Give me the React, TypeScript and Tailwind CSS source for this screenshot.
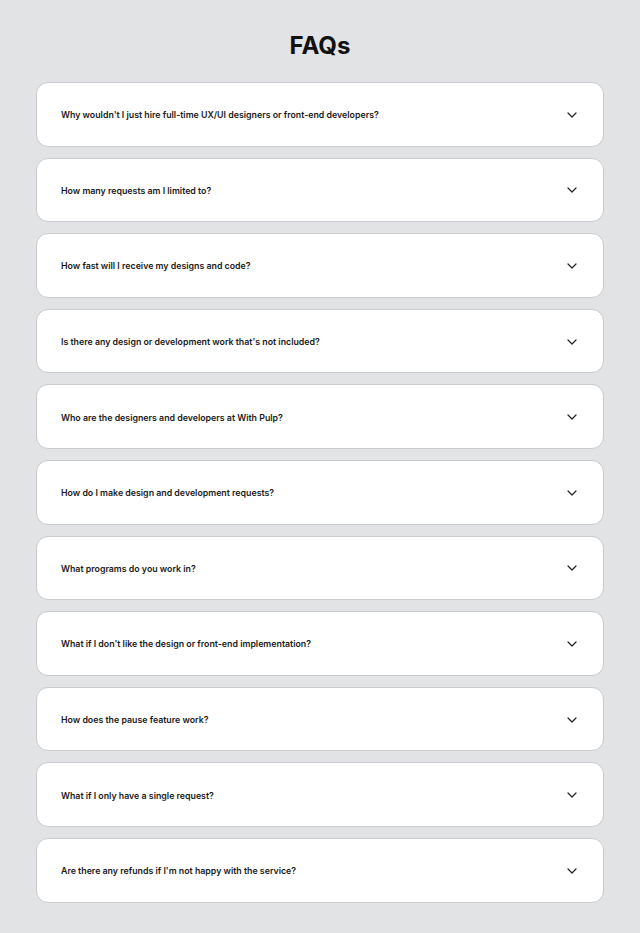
import React from "react";

const faqs = [
  "Why wouldn't I just hire full-time UX/UI designers or front-end developers?",
  "How many requests am I limited to?",
  "How fast will I receive my designs and code?",
  "Is there any design or development work that's not included?",
  "Who are the designers and developers at With Pulp?",
  "How do I make design and development requests?",
  "What programs do you work in?",
  "What if I don't like the design or front-end implementation?",
  "How does the pause feature work?",
  "What if I only have a single request?",
  "Are there any refunds if I'm not happy with the service?",
];

export default function App() {
  return (
    <div className="min-h-[933px] bg-[#e2e3e5] px-[36px] pt-[30px] pb-[31px]" style={{ fontFamily: "Inter, 'Noto Sans', sans-serif" }}>
      <h1 className="text-center text-[24px] leading-[32px] font-bold text-[#111] mb-[20px]">FAQs</h1>
      <div className="flex flex-col gap-[11px]">
        {faqs.map((q) => (
          <div key={q} className="h-[64.6px] bg-white border border-[#c8cacd] rounded-[12px] flex items-center justify-between pl-[24px] pr-[26px] pt-[1px]">
            <span className="text-[8.8px] font-semibold text-[#1a1a1a]">{q}</span>
            <svg width="10" height="6" viewBox="0 0 10 6" fill="none">
              <path d="M1 1l4 4 4-4" stroke="#222" strokeWidth="1.2" strokeLinecap="round" strokeLinejoin="round" />
            </svg>
          </div>
        ))}
      </div>
    </div>
  );
}
